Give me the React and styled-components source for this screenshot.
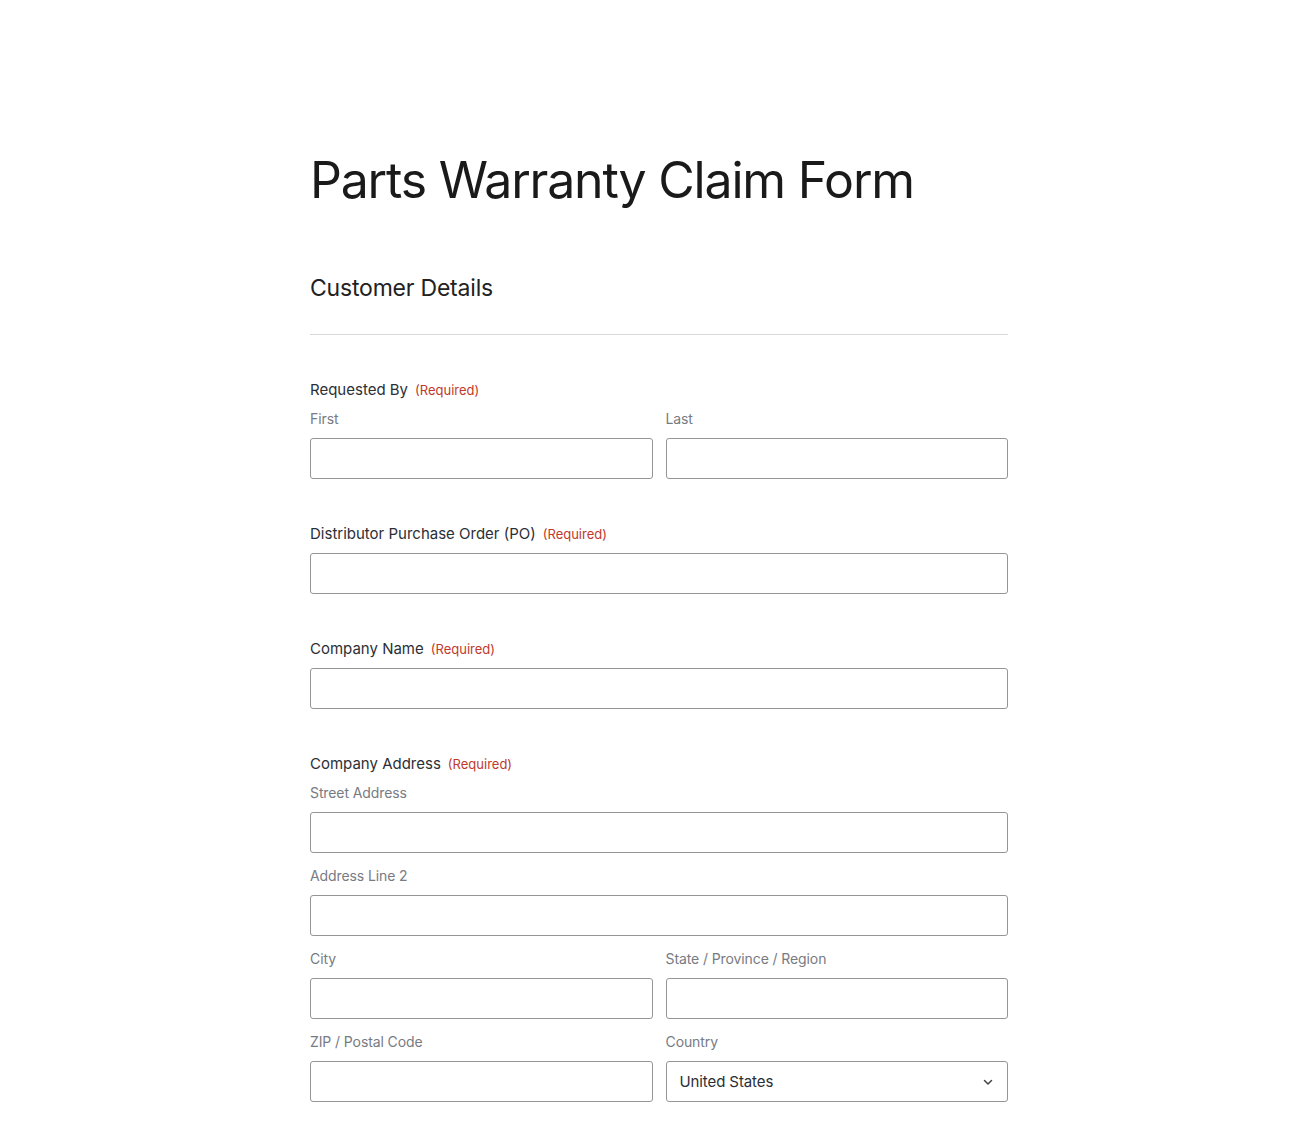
import React from "react";
import styled, { createGlobalStyle } from "styled-components";

const Global = createGlobalStyle`
  html, body { margin: 0; padding: 0; background: #fff; }
  body { font-family: Inter, "Noto Sans", sans-serif; color: #222; }
  * { box-sizing: border-box; }
`;

const Page = styled.div`
  padding: 150px 0 40px 310px;
`;

const Form = styled.form`
  width: 698px;
  display: flex;
  flex-direction: column;
`;

const Title = styled.h1`
  margin: 0;
  font-size: 50px;
  line-height: 60px;
  font-weight: 400;
  letter-spacing: -1.2px;
  color: #1a1a1a;
`;

const SectionTitle = styled.h2`
  margin: 62px 0 0;
  font-size: 23px;
  line-height: 32px;
  font-weight: 400;
  letter-spacing: -0.2px;
  color: #222;
`;

const Divider = styled.hr`
  margin: 30px 0 0;
  border: 0;
  border-top: 1px solid #d9d9d9;
`;

const Field = styled.div`
  display: flex;
  flex-direction: column;
  margin-top: ${(p) => p.$top || 45}px;
`;

const Label = styled.div`
  font-size: 15px;
  line-height: 20px;
  color: #2b2f36;
  letter-spacing: 0;
  margin-bottom: 9px;
`;

const Required = styled.span`
  font-size: 13px;
  color: #c0392b;
  margin-left: 7px;
  letter-spacing: 0;
`;

const Row = styled.div`
  display: grid;
  grid-template-columns: ${(p) => (p.$cols === 2 ? "1fr 1fr" : "1fr")};
  column-gap: 13px;
  & + & {
    margin-top: 13px;
  }
`;

const Sub = styled.div`
  display: flex;
  flex-direction: column;
`;

const SubLabel = styled.label`
  font-size: 14px;
  line-height: 20px;
  color: #777b82;
  letter-spacing: -0.1px;
  margin-bottom: 9px;
`;

const Input = styled.input`
  height: 41px;
  width: 100%;
  border: 1px solid #959595;
  border-radius: 3px;
  background: #fff;
  font: inherit;
  padding: 0 13px;
`;

const SelectWrap = styled.div`
  position: relative;
  height: 41px;
  border: 1px solid #959595;
  border-radius: 3px;
  display: flex;
  align-items: center;
  padding: 0 13px;
  font-size: 15px;
  color: #2b2f36;
  letter-spacing: -0.1px;
`;

const Chevron = styled.svg`
  position: absolute;
  right: 13px;
  top: 50%;
  transform: translateY(-50%);
`;

function SubField({ label, select }) {
  return (
    <Sub>
      <SubLabel>{label}</SubLabel>
      {select ? (
        <SelectWrap>
          United States
          <Chevron width="12" height="12" viewBox="0 0 12 12" fill="none">
            <path d="M2.5 4.5 6 8l3.5-3.5" stroke="#444" strokeWidth="1.5" strokeLinecap="round" strokeLinejoin="round" />
          </Chevron>
        </SelectWrap>
      ) : (
        <Input />
      )}
    </Sub>
  );
}

export default function App() {
  return (
    <>
      <Global />
      <Page>
        <Form>
          <Title>Parts Warranty Claim Form</Title>
          <SectionTitle>Customer Details</SectionTitle>
          <Divider />

          <Field $top={45}>
            <Label>
              Requested By<Required>(Required)</Required>
            </Label>
            <Row $cols={2}>
              <SubField label="First" />
              <SubField label="Last" />
            </Row>
          </Field>

          <Field>
            <Label>
              Distributor Purchase Order (PO)<Required>(Required)</Required>
            </Label>
            <Input />
          </Field>

          <Field>
            <Label>
              Company Name<Required>(Required)</Required>
            </Label>
            <Input />
          </Field>

          <Field>
            <Label>
              Company Address<Required>(Required)</Required>
            </Label>
            <Row>
              <SubField label="Street Address" />
            </Row>
            <Row>
              <SubField label="Address Line 2" />
            </Row>
            <Row $cols={2}>
              <SubField label="City" />
              <SubField label="State / Province / Region" />
            </Row>
            <Row $cols={2}>
              <SubField label="ZIP / Postal Code" />
              <SubField label="Country" select />
            </Row>
          </Field>
        </Form>
      </Page>
    </>
  );
}
